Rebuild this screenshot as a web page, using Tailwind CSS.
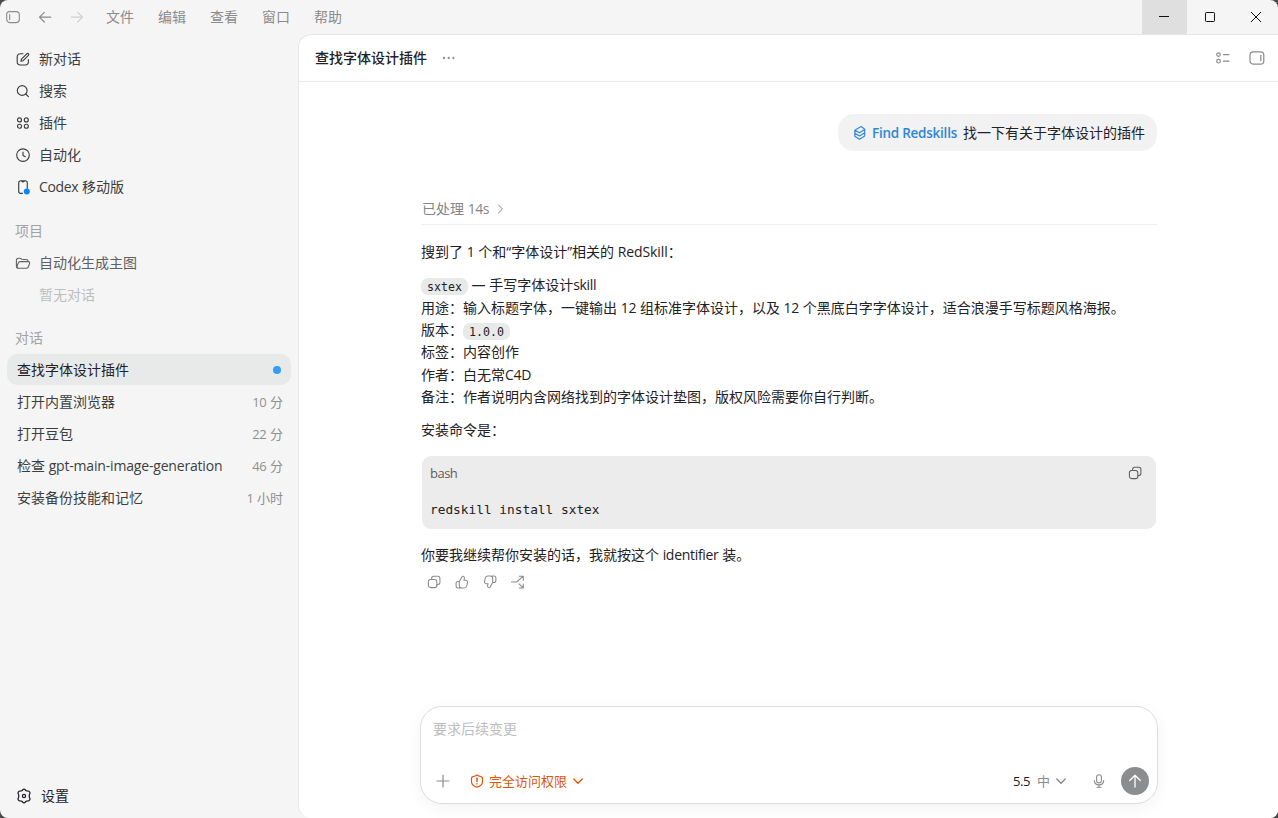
<!DOCTYPE html>
<html lang="zh-CN">
<head>
    <meta charset="UTF-8">
    <meta name="viewport" content="width=device-width, initial-scale=1.0">
    <title>查找字体设计插件</title>
    <script src="https://cdn.jsdelivr.net/npm/@tailwindcss/browser@4"></script>
</head>
<body class="h-screen overflow-hidden bg-[#4a4a4a] font-['Open_Sans','Noto_Sans_CJK_SC',sans-serif] text-[14px] leading-[22px] text-[#1f2124]">
    <div class="flex h-full flex-col overflow-hidden rounded-[8px] bg-[#f5f5f5]">
        <!-- Title bar -->
        <header class="flex h-[35px] shrink-0 items-center justify-between text-[#8b8b8b]">
            <div class="flex items-center pl-[6px] pb-px">
                <svg class="h-[14px] w-[14px]" viewBox="0 0 14 14" fill="none" stroke="currentColor" stroke-width="1.1" stroke-linecap="round"><rect x="0.7" y="1.6" width="12.6" height="11" rx="3"/><path d="M3.7 4.6v5"/></svg>
                <svg class="ml-[18px] h-[14px] w-[14px]" viewBox="0 0 14 14" fill="none" stroke="currentColor" stroke-width="1.2" stroke-linecap="round" stroke-linejoin="round"><path d="M12.7 7.2H1.5M6.3 2.4 1.5 7.2l4.8 4.8"/></svg>
                <svg class="ml-[18px] h-[14px] w-[14px] text-[#d0d0d0]" viewBox="0 0 14 14" fill="none" stroke="currentColor" stroke-width="1.2" stroke-linecap="round" stroke-linejoin="round"><path d="M1.3 7.2h11.2M7.7 2.4l4.8 4.8L7.7 12"/></svg>
                <nav class="ml-[22px] flex gap-6">
                    <span>文件</span>
                    <span>编辑</span>
                    <span>查看</span>
                    <span>窗口</span>
                    <span>帮助</span>
                </nav>
            </div>
            <div class="flex h-full text-[#111]">
                <div class="flex w-[45px] items-center justify-center bg-[#dfdfdf] pr-px pb-[2px]">
                    <svg class="h-[12px] w-[12px]" viewBox="0 0 12 12" stroke="currentColor"><path d="M1 5.5h10"/></svg>
                </div>
                <div class="flex w-[46px] items-center justify-center pb-px">
                    <svg class="h-[12px] w-[12px]" viewBox="0 0 12 12" fill="none" stroke="currentColor"><rect x="1.5" y="1.5" width="9" height="9" rx="0.8"/></svg>
                </div>
                <div class="flex w-[45px] items-center justify-center pb-px">
                    <svg class="h-[12px] w-[12px]" viewBox="0 0 12 12" fill="none" stroke="currentColor"><path d="m1 1 10 10M11 1 1 11"/></svg>
                </div>
            </div>
        </header>

        <div class="flex min-h-0 flex-1">
            <!-- Sidebar -->
            <aside class="flex w-[298px] shrink-0 flex-col pt-2 text-[#3c3e40]">
                <nav class="flex flex-col">
                    <a class="flex h-8 items-center gap-[9px] pl-4">
                        <svg class="h-[14px] w-[14px]" viewBox="0 0 14 14" fill="none" stroke="currentColor" stroke-width="1.15" stroke-linecap="round" stroke-linejoin="round"><path d="M7 1.700H4.400C2.300 1.700 1.200 2.900 1.200 5v4.800c0 2 1.100 3.200 3.200 3.200h4.800c2.100 0 3.200-1.200 3.200-3.200V7.500"/><path d="M5 9.300l.5-2.200 5.300-5.300c1.200-1 2.600.4 1.600 1.600L7.200 8.700z"/></svg>
                        <span>新对话</span>
                    </a>
                    <a class="flex h-8 items-center gap-[9px] pl-4">
                        <svg class="h-[14px] w-[14px]" viewBox="0 0 14 14" fill="none" stroke="currentColor" stroke-width="1.15" stroke-linecap="round"><circle cx="6.2" cy="6.5" r="4.9"/><path d="m9.8 10 2.6 2.6"/></svg>
                        <span>搜索</span>
                    </a>
                    <a class="flex h-8 items-center gap-[9px] pl-4">
                        <svg class="h-[14px] w-[14px]" viewBox="0 0 14 14" fill="none" stroke="currentColor" stroke-width="1.15"><circle cx="3.5" cy="3.9" r="2"/><circle cx="10.3" cy="3.9" r="2"/><circle cx="3.5" cy="10.2" r="2"/><circle cx="10.3" cy="10.2" r="2"/></svg>
                        <span>插件</span>
                    </a>
                    <a class="flex h-8 items-center gap-[9px] pl-4">
                        <svg class="h-[14px] w-[14px]" viewBox="0 0 14 14" fill="none" stroke="currentColor" stroke-width="1.15" stroke-linecap="round" stroke-linejoin="round"><circle cx="7" cy="7.1" r="6.3"/><path d="M7 4v3.4l2.3 1.3"/></svg>
                        <span>自动化</span>
                    </a>
                    <a class="flex h-8 items-center gap-[9px] pl-4">
                        <svg class="h-[16px] w-[14px]" viewBox="0 0 14 16" fill="none" stroke="currentColor" stroke-width="1.15" stroke-linecap="round"><path d="M6.500 14.300H4.800c-1.400 0-2.100-.7-2.100-2.100V3.800c0-1.400.7-2.100 2.100-2.100h4.400c1.400 0 2.100.7 2.100 2.100v5.400M5.600 1.800c0 1.500 2.800 1.500 2.800 0"/><circle cx="10.800" cy="12.500" r="3" fill="#0a84ff" stroke="none"/></svg>
                        <span><span class="tracking-[-0.35px]">Codex</span> 移动版</span>
                    </a>
                </nav>

                <h2 class="mt-3 flex h-8 items-center pl-[15px] text-[#a3a3a3]">项目</h2>
                <a class="flex h-8 items-center gap-2 pl-[15px] text-[#5f6062]">
                    <svg class="h-[14px] w-[16px]" viewBox="0 0 16 14" fill="none" stroke="currentColor" stroke-width="1.1" stroke-linejoin="round"><path d="M3.200 12.200c-1.300-.1-1.800-.8-1.800-2.200V4.300c0-1.400.7-2.100 2.100-2.100h1.400c1.300 0 1.600 1.300 2.900 1.300h3.400c1.200 0 1.900.7 1.900 2"/><path d="M3.200 12.200c-1 0-1.500-.8-1.200-1.700l1.300-3.600c.3-.9.9-1.300 1.800-1.300h8.300c1 0 1.500.8 1.200 1.700l-1.200 3.500c-.3.900-.9 1.400-1.800 1.400z"/></svg>
                    <span>自动化生成主图</span>
                </a>
                <p class="flex h-8 items-center pl-[39px] text-[#bebebe]">暂无对话</p>

                <h2 class="mt-[11px] flex h-8 items-center pl-[15px] text-[#a3a3a3]">对话</h2>
                <ul class="flex flex-col gap-px px-[7px]">
                    <li class="flex h-[31px] items-center justify-between rounded-[10px] bg-[#e8eaea] pl-[10px] pr-[10px] text-[#1f2124]">
                        <span>查找字体设计插件</span>
                        <span class="h-2 w-2 rounded-full bg-[#339cff]"></span>
                    </li>
                    <li class="flex h-[31px] items-center justify-between pl-[10px] pr-2">
                        <span>打开内置浏览器</span>
                        <span class="pt-px text-[13px] text-[#8f8f8f]"><span class="tracking-[-0.2px]">10</span> 分</span>
                    </li>
                    <li class="flex h-[31px] items-center justify-between pl-[10px] pr-2">
                        <span>打开豆包</span>
                        <span class="pt-px text-[13px] text-[#8f8f8f]"><span class="tracking-[-0.2px]">22</span> 分</span>
                    </li>
                    <li class="flex h-[31px] items-center justify-between pl-[10px] pr-2">
                        <span>检查 <span class="tracking-[-0.18px]">gpt-main-image-generation</span></span>
                        <span class="pt-px text-[13px] text-[#8f8f8f]"><span class="tracking-[-0.2px]">46</span> 分</span>
                    </li>
                    <li class="flex h-[31px] items-center justify-between pl-[10px] pr-2">
                        <span>安装备份技能和记忆</span>
                        <span class="pt-px text-[13px] text-[#8f8f8f]"><span class="tracking-[-0.2px]">1</span> 小时</span>
                    </li>
                </ul>

                <a class="mt-auto mb-[6px] flex h-8 items-center gap-[9px] pl-4 text-[#1f2124]">
                    <svg class="h-[16px] w-[16px]" viewBox="0 0 16 16" fill="none" stroke="currentColor" stroke-width="1.25" stroke-linejoin="round"><path d="M6.500 2.100c.8-1.300 2.200-1.300 3 0 .3.500.7.700 1.300.7 1.500 0 2.900.8 3.200 1.700.3.800-.8 1.600-.8 3.500s1.100 2.700.8 3.500c-.3.900-1.700 1.700-3.200 1.700-.6 0-1 .2-1.300.7-.8 1.300-2.200 1.300-3 0-.3-.5-.7-.7-1.300-.7-1.500 0-2.900-.8-3.200-1.700-.3-.8.8-1.600.8-3.500S1.700 5.300 2 4.500c.3-.9 1.700-1.700 3.200-1.700.6 0 1-.2 1.300-.7z"/><circle cx="8" cy="8" r="1.6"/></svg>
                    <span>设置</span>
                </a>
            </aside>

            <!-- Conversation -->
            <main class="-mt-px flex min-w-0 flex-1 flex-col rounded-l-[13px] border border-r-0 border-b-0 border-[#e6e6e6] bg-white">
                <div class="flex h-[47px] shrink-0 items-center justify-between border-b border-[#ececec] pl-4 pr-[13px]">
                    <div class="flex items-center gap-[15px]">
                        <h1 class="font-medium">查找字体设计插件</h1>
                        <svg class="h-[4px] w-[14px] text-[#8b8b8b]" viewBox="0 0 14 4" fill="currentColor"><circle cx="2" cy="2" r="1.15"/><circle cx="6.7" cy="2" r="1.15"/><circle cx="11.4" cy="2" r="1.15"/></svg>
                    </div>
                    <div class="flex items-center gap-[19px] text-[#8b8b8b]">
                        <svg class="h-[14px] w-[14px]" viewBox="0 0 14 14" fill="none" stroke="currentColor" stroke-width="1.2" stroke-linecap="round"><circle cx="2.5" cy="3.6" r="1.8"/><circle cx="2.5" cy="10.2" r="1.8"/><path d="M7.500 3.600h5.400M7.500 10.200h5.400"/></svg>
                        <svg class="h-[14px] w-[16px]" viewBox="0 0 16 14" fill="none" stroke="currentColor" stroke-width="1.2" stroke-linecap="round"><rect x="1" y="0.9" width="13.8" height="12.2" rx="3.2"/><path d="M11.800 4.300v5.400"/></svg>
                    </div>
                </div>

                <div class="ml-[122px] flex min-h-0 w-[736px] flex-1 flex-col pt-8">
                    <div class="flex h-[37px] items-center self-end rounded-[16px] bg-[#f2f2f2] pl-[15px] pr-3">
                        <svg class="h-[14px] w-[14px] text-[#2f86d6]" viewBox="0 0 14 14" fill="none" stroke="currentColor" stroke-width="1.15" stroke-linejoin="round"><path d="M1.800 4.300 7.700.8c.3-.2.500-.2.800 0l3.200 2.400v6.900L6.500 13.200 1.800 10.300zM1.800 4.300l4.700 2.500 5.200-3.200M1.800 7.300l4.700 2.600 5.200-3.200"/></svg>
                        <span class="ml-[5px] text-[13.5px] font-semibold tracking-[-0.24px] text-[#2f86d6]">Find Redskills</span>
                        <span class="ml-[6px]">找一下有关于字体设计的插件</span>
                    </div>

                    <div class="mt-[43px] flex h-[31px] items-center gap-2 border-b border-[#f0f0f0] pl-px text-[#858585]">
                        <span>已处理 <span class="tracking-[-0.5px]">14s</span></span>
                        <svg class="h-[10px] w-[7px]" viewBox="0 0 7 10" fill="none" stroke="currentColor" stroke-linecap="round" stroke-linejoin="round"><path d="m1.500 1 4 4-4 4"/></svg>
                    </div>

                    <p class="mt-4">搜到了 <span>1</span> 个和<span>“</span>字体设计<span>”</span>相关的 <span class="tracking-[-0.1px]">RedSkill</span>：</p>

                    <div class="mt-[11.2px] leading-[22.4px]">
                        <p><code class="rounded-[7px] bg-[#e8eaea] px-[6px] py-[1.5px] font-['DejaVu_Sans_Mono',monospace] text-[11.6px] leading-none">sxtex</code> <span>—</span> 手写字体设计<span class="tracking-[-0.3px]">skill</span></p>
                        <p>用途：输入标题字体，一键输出 <span class="tracking-[-0.2px]">12</span> 组标准字体设计，以及 <span class="tracking-[-0.2px]">12</span> 个黑底白字字体设计，适合浪漫手写标题风格海报。</p>
                        <p>版本：<code class="rounded-[7px] bg-[#e8eaea] px-[6px] py-[1.5px] font-['DejaVu_Sans_Mono',monospace] text-[11.6px] leading-none">1.0.0</code></p>
                        <p>标签：内容创作</p>
                        <p>作者：白无常<span class="tracking-[-0.3px]">C4D</span></p>
                        <p>备注：作者说明内含网络找到的字体设计垫图，版权风险需要你自行判断。</p>
                    </div>

                    <p class="mt-[10.8px]">安装命令是：</p>

                    <div class="mt-[15px] ml-px mr-px h-[73px] shrink-0 rounded-[9px] bg-[#ececec] px-2 pt-[6px]">
                        <div class="flex items-center justify-between pr-[6px] text-[13px] text-[#5e5e5e]">
                            <span class="tracking-[-0.5px]">bash</span>
                            <svg class="h-[14px] w-[14px]" viewBox="0 0 14 14" fill="none" stroke="currentColor" stroke-width="1.05" stroke-linejoin="round"><rect x="1.4" y="4.4" width="8.4" height="8.2" rx="2.2"/><path d="M4.600 4.400V3.400c0-1.300.7-2.100 2-2.100h4.200c1.300 0 2.100.8 2.100 2.100v4.200c0 1.300-.8 2-2.100 2h-1"/></svg>
                        </div>
                        <pre class="mt-[15px] font-['DejaVu_Sans_Mono',monospace] text-[12.8px]">redskill install sxtex</pre>
                    </div>

                    <p class="mt-[15px]">你要我继续帮你安装的话，我就按这个 <span class="tracking-[-0.3px]">identifier</span> 装。</p>

                    <div class="mt-[9px] flex gap-[14px] pl-[6px] text-[#8b8b8b]">
                        <svg class="h-[14px] w-[14px]" viewBox="0 0 14 14" fill="none" stroke="currentColor" stroke-width="1.05" stroke-linejoin="round"><rect x="1.4" y="4.4" width="8.4" height="8.2" rx="2.2"/><path d="M4.600 4.400V3.400c0-1.300.7-2.100 2-2.100h4.200c1.300 0 2.100.8 2.100 2.100v4.200c0 1.300-.8 2-2.100 2h-1"/></svg>
                        <svg class="h-[14px] w-[14px]" viewBox="0 0 14 14" fill="none" stroke="currentColor" stroke-width="1.05" stroke-linejoin="round"><path d="M4.300 6.500 7 1.700c.2-.4.6-.6 1-.5 1.300.3 1.600 1.300 1.300 2.600l-.4 1.500h1.700c1.400 0 2.200 1.100 1.900 2.400l-.8 3.300c-.3 1.200-1.200 2-2.500 2H6.800c-1.200 0-2.500-.6-2.500-2.200zM4.300 6.500H3.100c-1.200 0-2 .7-2 1.900V11c0 1.200.8 2 2 2h2.200"/></svg>
                        <svg class="h-[14px] w-[14px] rotate-180" viewBox="0 0 14 14" fill="none" stroke="currentColor" stroke-width="1.05" stroke-linejoin="round"><path d="M4.300 6.500 7 1.700c.2-.4.6-.6 1-.5 1.300.3 1.600 1.300 1.300 2.600l-.4 1.500h1.700c1.400 0 2.200 1.100 1.900 2.400l-.8 3.300c-.3 1.200-1.200 2-2.500 2H6.800c-1.200 0-2.500-.6-2.500-2.200zM4.300 6.500H3.100c-1.200 0-2 .7-2 1.900V11c0 1.200.8 2 2 2h2.200"/></svg>
                        <svg class="h-[14px] w-[14px]" viewBox="0 0 14 14" fill="none" stroke="currentColor" stroke-width="1.1" stroke-linecap="round" stroke-linejoin="round"><path d="M.3 7h5.300L12 1.400M8.300 1.200h4v4M8 8.900l4 3.800M12.300 9v4h-4"/></svg>
                    </div>

                    <!-- Composer -->
                    <div class="mt-auto -ml-px mb-[14px] flex h-[98px] w-[738px] shrink-0 flex-col justify-between rounded-[22px] border border-[#dedede] bg-white pt-[11px] pr-2 pb-2 pl-3 shadow-[0_4px_16px_rgba(0,0,0,0.05)]">
                        <p class="text-[#bdbdbd]">要求后续变更</p>
                        <div class="flex h-7 items-center justify-between">
                            <div class="flex items-center pl-[3px] text-[13px] text-[#e25507]">
                                <svg class="h-[14px] w-[14px] text-[#8b8b8b]" viewBox="0 0 14 14" stroke="currentColor" stroke-width="1.2" stroke-linecap="round"><path d="M7 1v12M1 7h12"/></svg>
                                <svg class="ml-5 h-[14px] w-[14px]" viewBox="0 0 14 14" fill="none" stroke="currentColor" stroke-width="1.2" stroke-linecap="round" stroke-linejoin="round"><path d="M7 .9c1.300.9 2.700 1.400 4 1.700 1 .2 1.500.8 1.500 1.800v3.200c0 2.900-2 4.700-5.500 5.600-3.500-.9-5.500-2.700-5.500-5.600V4.400c0-1 .5-1.600 1.500-1.800C4.300 2.300 5.700 1.800 7 .9z"/><path d="M7 4v3.500M7 9.800v.1" stroke-width="1.5"/></svg>
                                <span class="ml-[5px]">完全访问权限</span>
                                <svg class="ml-[6px] h-[10px] w-[10px]" viewBox="0 0 10 10" fill="none" stroke="currentColor" stroke-width="1.4" stroke-linecap="round" stroke-linejoin="round"><path d="m.8 3 4.200 4.200L9.200 3"/></svg>
                            </div>
                            <div class="flex items-center text-[13px] text-[#8b8b8b]">
                                <span class="tracking-[-0.4px] text-[#1a1c1f]">5.5</span>
                                <span class="ml-[7px]">中</span>
                                <svg class="ml-[6px] h-[10px] w-[10px]" viewBox="0 0 10 10" fill="none" stroke="currentColor" stroke-width="1.4" stroke-linecap="round" stroke-linejoin="round"><path d="m.8 3 4.200 4.200L9.200 3"/></svg>
                                <svg class="ml-[26px] h-[14px] w-[14px]" viewBox="0 0 14 14" fill="none" stroke="currentColor" stroke-width="1.1" stroke-linecap="round"><rect x="4.6" y="0.7" width="4.8" height="8.2" rx="2.4"/><path d="M2.300 6.600c.2 2.700 2 4.300 4.700 4.300s4.500-1.600 4.700-4.300M7 10.900v2.400M4.800 13.300h4.400"/></svg>
                                <button class="ml-[15px] flex h-7 w-7 items-center justify-center rounded-full bg-[#8c8d8f] text-white">
                                    <svg class="h-[14px] w-[14px]" viewBox="0 0 14 14" fill="none" stroke="currentColor" stroke-width="1.3" stroke-linecap="round" stroke-linejoin="round"><path d="M7 13V1.300M1.700 6.500 7 1.200l5.300 5.300"/></svg>
                                </button>
                            </div>
                        </div>
                    </div>
                </div>
            </main>
        </div>
    </div>
</body>
</html>
